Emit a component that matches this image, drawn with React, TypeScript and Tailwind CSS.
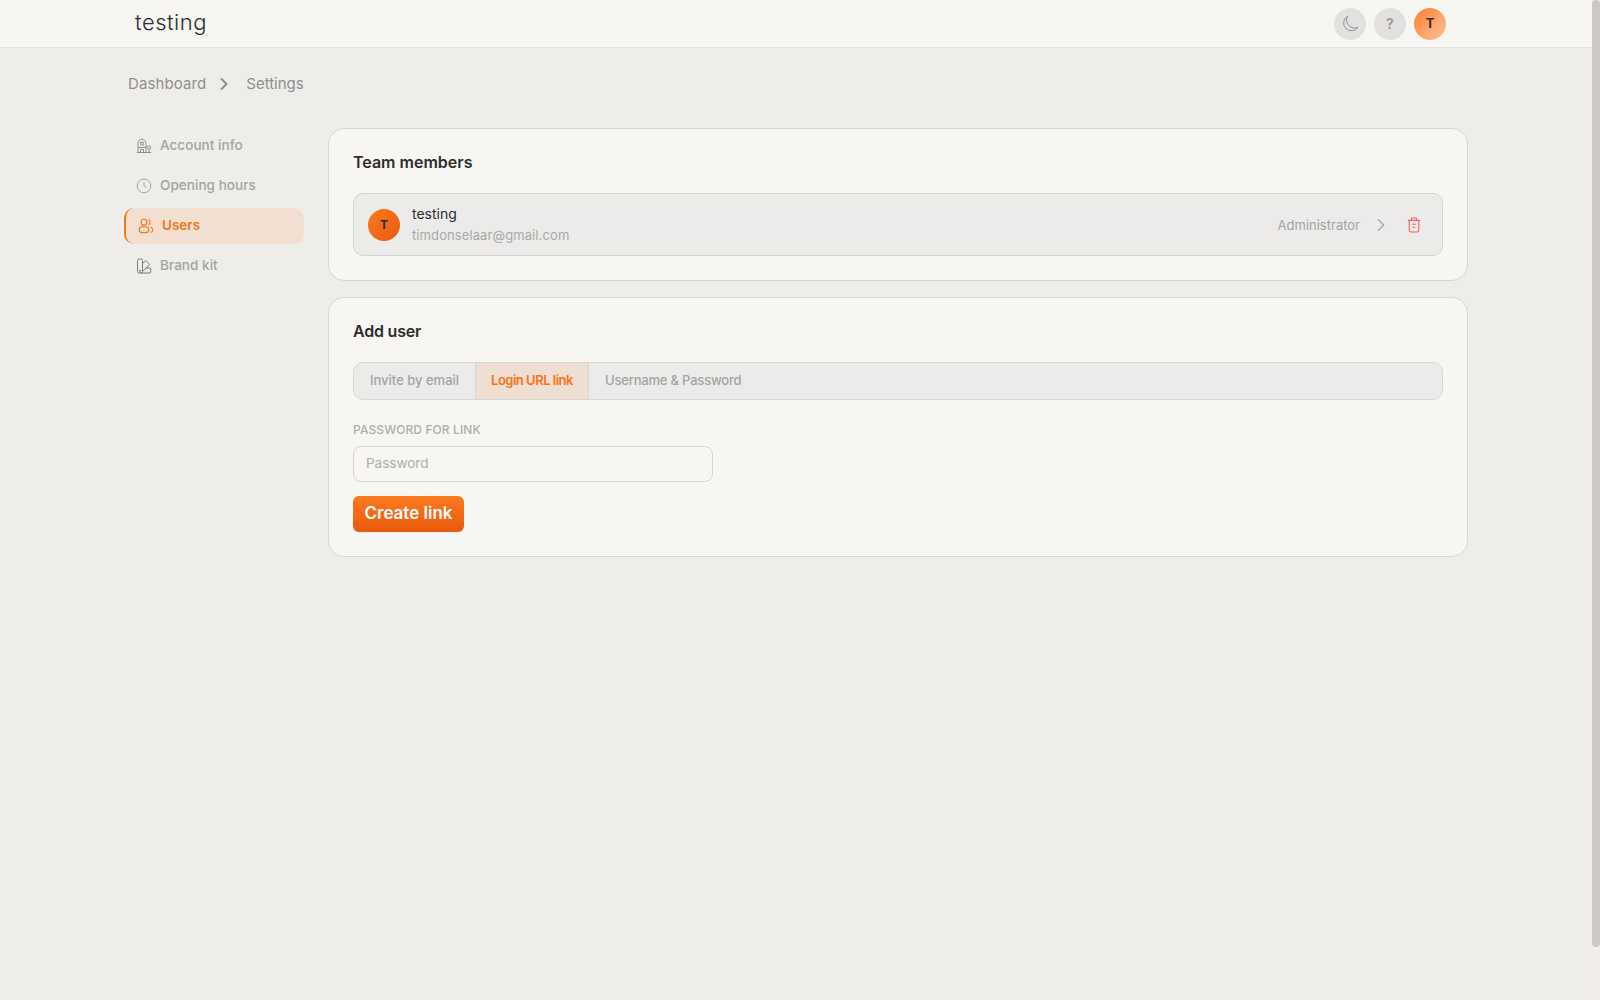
import { ChevronRight } from "lucide-react";

const font = "font-['Inter','Noto_Sans',sans-serif]";

function BuildingIcon() {
  return (
    <svg width="16" height="16" viewBox="0 0 16 16" fill="none" stroke="currentColor" strokeWidth="0.9">
      <path d="M2 14.5V5.5C2 3.3 3.7 1.2 6 1.2S10 3.3 10 5.5V14.5" />
      <path d="M.8 14.5h14.4" />
      <path d="M2 9.5h8M4.5 14.5V11.5h3v3" />
      <rect x="4.8" y="4.2" width="2.4" height="2.8" />
      <circle cx="13" cy="9.5" r="1.7" />
      <path d="M13 11.2v3.3" />
    </svg>
  );
}

function ClockIcon() {
  return (
    <svg width="16" height="16" viewBox="0 0 16 16" fill="none" stroke="currentColor" strokeWidth="0.9">
      <circle cx="8" cy="8" r="6.8" />
      <path d="M8 4.2V8l2.6 1.6" />
    </svg>
  );
}

function UsersIcon() {
  return (
    <svg width="16" height="16" viewBox="0 0 16 16" fill="none" stroke="currentColor" strokeWidth="1.1">
      <circle cx="6" cy="4.2" r="2.9" />
      <rect x="1.2" y="8.8" width="9.6" height="5.8" rx="2.9" />
      <path d="M10.4 1.6a2.9 2.9 0 0 1 0 5.2M12.6 9.2c1.4.5 2.2 1.6 2.2 2.7s-.8 2.2-2.2 2.6" />
    </svg>
  );
}

function BrandIcon() {
  return (
    <svg width="16" height="16" viewBox="0 0 16 16" fill="none" stroke="currentColor" strokeWidth="0.9">
      <rect x="1.5" y="1" width="5" height="14" rx="1.6" />
      <path d="M6.5 5.5 9 3.2c.5-.4 1.1-.4 1.5 0l2.4 2.6c.4.5.4 1.1 0 1.5L7 13" />
      <path d="M10 10h3.8c.6 0 1 .4 1 1v3c0 .6-.4 1-1 1H4" />
      <circle cx="4" cy="12.8" r=".7" />
    </svg>
  );
}

function MoonIcon() {
  return (
    <svg width="18" height="18" viewBox="0 0 18 18" fill="none" stroke="currentColor" strokeWidth="1">
      <path d="M6.6 1.2A7.8 7.8 0 1 0 17 12.2 8 8 0 0 1 6.6 1.2Z" />
    </svg>
  );
}

function TrashIcon() {
  return (
    <svg width="14" height="16" viewBox="0 0 14 16" fill="none" stroke="currentColor" strokeWidth="1.1">
      <path d="M.8 3.4h12.4M4.2 3.2 4.8 1h4.4l.6 2.2" />
      <path d="M2.2 3.6v9.6c0 1 .8 1.8 1.8 1.8h6c1 0 1.8-.8 1.8-1.8V3.6" />
      <path d="M5.2 7.2h3.6M5.6 10.2h2.8" />
    </svg>
  );
}

const navItems = [
  { label: "Account info", icon: <BuildingIcon />, iconClass: "text-[#858585] flex" },
  { label: "Opening hours", icon: <ClockIcon />, iconClass: "text-[#9c9c9c] flex" },
  { label: "Users", icon: <UsersIcon />, iconClass: "flex", active: true },
  { label: "Brand kit", icon: <BrandIcon />, iconClass: "text-[#707070] flex" },
];

export default function App() {
  return (
    <div className={`${font} flex h-[1000px] overflow-hidden bg-[#eeede9] text-[#2d2d2d]`}>
      <div className="flex-1 min-w-0">
        {/* Header */}
        <header className="h-[48px] bg-[#f7f6f3] border-b border-[#e2e1dd]">
          <div className="w-[1344px] mx-auto h-full flex items-center justify-between pl-[11px] pr-[22px]">
            <span className="text-[22px] leading-[28px] tracking-[0.5px] font-light pb-[3px]">testing</span>
            <div className="flex items-center gap-2">
              <div className="w-8 h-8 rounded-full bg-[#e2e1df] flex items-center justify-center text-[#919191]">
                <MoonIcon />
              </div>
              <div className="w-8 h-8 rounded-full bg-[#e2e1df] flex items-center justify-center text-[#9c9c9c] text-sm font-bold">
                ?
              </div>
              <div className="w-8 h-8 rounded-full bg-gradient-to-br from-[#fb7b24] to-[#fdc397] flex items-center justify-center text-[13px] font-bold">
                T
              </div>
            </div>
          </div>
        </header>

        <main className="w-[1344px] mx-auto">
          {/* Breadcrumb */}
          <div className="flex items-center h-[24px] mt-[24px] mb-[32px] pl-[4px] text-[15px] text-[#8f8f8f]">
            <span className="tracking-[0.1px]">Dashboard</span>
            <ChevronRight size={20} strokeWidth={2.4} className="ml-[8px] mr-[12px]" />
            <span>Settings</span>
          </div>

          <div className="flex gap-6">
            {/* Sidebar */}
            <nav className="w-[180px] shrink-0 flex flex-col gap-1">
              {navItems.map((item) => (
                <div
                  key={item.label}
                  className={
                    item.active
                      ? "h-9 flex items-center gap-2 pl-[12px] rounded-[10px] border-l-2 border-[#f97316] bg-[#f2dfd1] text-[#f97316] font-semibold text-[13.5px]"
                      : "h-9 flex items-center gap-2 pl-[12px] rounded-[10px] text-[#a3a3a3] font-medium text-[13.5px] tracking-[0.05px]"
                  }
                >
                  <span className={item.iconClass}>{item.icon}</span>
                  <span className="pb-[2px]">{item.label}</span>
                </div>
              ))}
            </nav>

            <div className="flex-1 flex flex-col gap-4">
              {/* Team members */}
              <section className="bg-[#f7f6f2] border border-[#d8d7d3] rounded-[16px] p-6">
                <h2 className="text-[16px] leading-[18px] font-semibold mb-[22px]">Team members</h2>
                <div className="h-[63px] flex items-center pl-[14px] pr-[21px] bg-[#ecebe9] border border-[#d5d4d1] rounded-[10px]">
                  <div className="w-8 h-8 rounded-full bg-gradient-to-br from-[#fb7a1e] to-[#ea580c] flex items-center justify-center text-[12px] font-bold shrink-0">
                    T
                  </div>
                  <div className="ml-3 flex-1">
                    <div className="text-[14px] leading-5">testing</div>
                    <div className="text-[13px] leading-5 mt-[1px] tracking-[0.1px] text-[#a8a8a8]">timdonselaar@gmail.com</div>
                  </div>
                  <span className="text-[13px] text-[#a3a3a3] pt-[3px]">Administrator</span>
                  <ChevronRight size={22} strokeWidth={1.2} className="ml-[10px] mr-[15px] text-[#a3a3a3]" />
                  <span className="text-[#f95f5f] flex">
                    <TrashIcon />
                  </span>
                </div>
              </section>

              {/* Add user */}
              <section className="bg-[#f7f6f2] border border-[#d8d7d3] rounded-[16px] p-6">
                <h2 className="text-[16px] leading-[18px] font-semibold tracking-[-0.2px] mb-[22px]">Add user</h2>
                <div className="flex h-[38px] bg-[#ecebe9] border border-[#d8d7d5] rounded-[10px] overflow-hidden text-[13px] text-[#a3a3a3] font-medium">
                  <div className="w-[122px] flex items-center justify-center border-r border-[#d8d7d5]">Invite by email</div>
                  <div className="w-[113px] flex items-center justify-center border-r border-[#d8d7d5] bg-[#eedfd2] text-[#f97316] font-semibold tracking-[-0.5px]">Login URL link</div>
                  <div className="pl-4 flex items-center tracking-[-0.2px]">Username &amp; Password</div>
                </div>
                <label className="block mt-[22px] text-[12px] leading-4 font-medium tracking-[0.1px] text-[#adadad]">PASSWORD FOR LINK</label>
                <input
                  placeholder="Password"
                  className="block mt-2 w-[360px] h-9 px-3 pb-[2px] bg-transparent border border-[#d5d4d1] rounded-[8px] text-[13.5px] outline-none placeholder:text-[#adadad]"
                />
                <button className="block mt-[14px] w-[111px] h-9 rounded-[6px] bg-gradient-to-b from-[#fb7a1e] to-[#ea580c] text-white text-[17px] font-semibold">
                  Create link
                </button>
              </section>
            </div>
          </div>
        </main>
      </div>

      {/* Scrollbar */}
      <div className="w-2 shrink-0 bg-[#f1eee8]">
        <div className="h-[947px] rounded-full bg-[#ccc9c2]" />
      </div>
    </div>
  );
}
